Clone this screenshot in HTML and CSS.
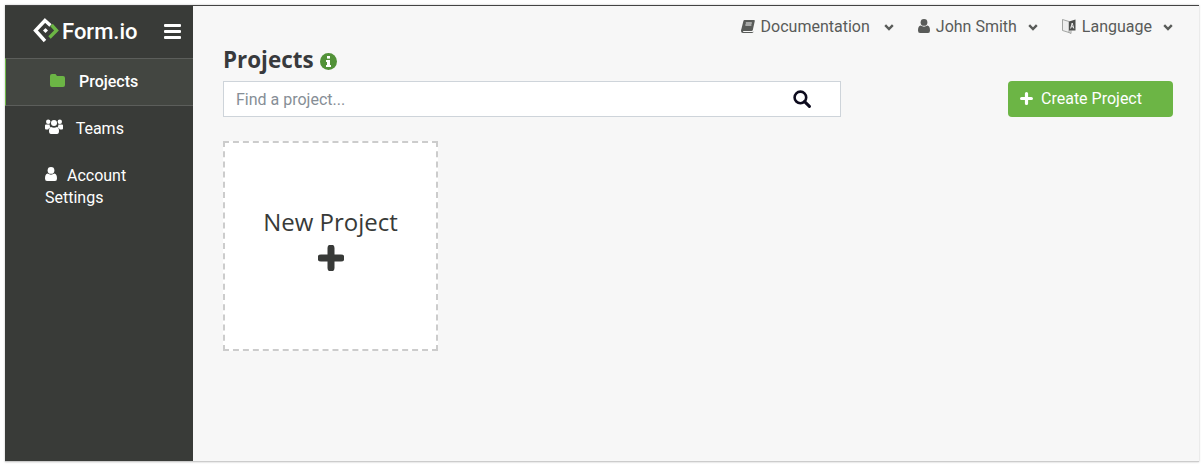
FILE: index.html
```html
<!DOCTYPE html>
<html lang="en">
<head>
    <meta charset="UTF-8">
    <meta name="viewport" content="width=device-width, initial-scale=1.0">
    <title>Form.io</title>
    <link rel="stylesheet" href="styles.css">
</head>
<body>
    <div class="window">
        <!-- Sidebar -->
        <div class="sidebar">
            <div class="brand">
                <svg class="brand-logo" width="26" height="26" viewBox="0 0 26 26">
                    <path d="M17.5 7.5 L12 2.5 L2.5 12.5 L12 23" fill="none" stroke="#fff" stroke-width="3.4"/>
                    <path d="M18.5 7 L23.5 12.5 L16.5 19.5" fill="none" stroke="#6cb545" stroke-width="3.4"/>
                    <path d="M12.5 10 L15 12.5 L12.5 15 L10 12.5 Z" fill="#fff"/>
                </svg>
                <span class="brand-name">Form.io</span>
                <svg class="burger" width="17" height="15" viewBox="0 0 17 15">
                    <rect y="0" width="17" height="3" rx="1" fill="#fff"/>
                    <rect y="6" width="17" height="3" rx="1" fill="#fff"/>
                    <rect y="12" width="17" height="3" rx="1" fill="#fff"/>
                </svg>
            </div>
            <a class="side-link side-active">
                <svg class="side-icon" width="15" height="13" viewBox="0 0 15 13"><path d="M2 0 H5.5 L7 2 H13 A2 2 0 0 1 15 4 V11 A2 2 0 0 1 13 13 H2 A2 2 0 0 1 0 11 V2 A2 2 0 0 1 2 0 Z" fill="#6cb545"/></svg>
                Projects
            </a>
            <a class="side-link side-teams">
                <svg class="side-icon" width="18" height="15" viewBox="0 0 18 15" fill="#fff">
                    <circle cx="3.2" cy="2.8" r="2.2"/><circle cx="14.8" cy="2.8" r="2.2"/><circle cx="9" cy="4" r="3"/>
                    <path d="M0 6.5 Q0 5.6 1 5.6 H4.6 Q4.6 7.5 5.6 8.5 Q3.6 9 3.2 10.6 H1 Q0 10.6 0 9.6 Z"/>
                    <path d="M18 6.5 Q18 5.6 17 5.6 H13.4 Q13.4 7.5 12.4 8.5 Q14.4 9 14.8 10.6 H17 Q18 10.6 18 9.6 Z"/>
                    <path d="M6 8 Q9 9.6 12 8 Q14 8.6 14 12 Q14 15 12 15 H6 Q4 15 4 12 Q4 8.6 6 8 Z"/>
                </svg>
                Teams
            </a>
            <a class="side-link side-account">
                <svg class="side-icon" width="12" height="14" viewBox="0 0 12 14" fill="#fff">
                    <circle cx="6" cy="3.4" r="3.4"/>
                    <path d="M2.6 6.6 Q6 8.8 9.4 6.6 Q12 7.2 12 11.5 Q12 14 10 14 H2 Q0 14 0 11.5 Q0 7.2 2.6 6.6 Z"/>
                </svg>
                Account Settings
            </a>
        </div>

        <!-- Main area -->
        <div class="main">
            <div class="topnav">
                <a class="top-link top-doc">
                    <svg width="14" height="13" viewBox="0 0 14 13" fill="#595b59"><path d="M3.5 0 H13 Q14 0 13.8 1 L11.8 10 Q11.6 11 10.5 11 H2.6 Q1.8 11 1.9 11.6 Q2 12 2.6 12 H11.6 L12.6 11.6 Q12.4 13 11 13 H2 Q0 13 0 11 Q0 10 0.4 9 L2.4 1 Q2.6 0 3.5 0 Z"/><path d="M4.8 3 H10.8 M4.4 5 H10.4" stroke="#f7f7f7" stroke-width="1"/></svg>
                    <span>Documentation</span>
                    <svg class="chev" width="10" height="7" viewBox="0 0 10 7"><path d="M1.2 1.2 L5 5 L8.8 1.2" fill="none" stroke="#595b59" stroke-width="2.4"/></svg>
                </a>
                <a class="top-link">
                    <svg width="12" height="14" viewBox="0 0 12 14" fill="#595b59"><circle cx="6" cy="3.4" r="3.4"/><path d="M2.6 6.6 Q6 8.8 9.4 6.6 Q12 7.2 12 11.5 Q12 14 10 14 H2 Q0 14 0 11.5 Q0 7.2 2.6 6.6 Z"/></svg>
                    <span>John Smith</span>
                    <svg class="chev" width="10" height="7" viewBox="0 0 10 7"><path d="M1.2 1.2 L5 5 L8.8 1.2" fill="none" stroke="#595b59" stroke-width="2.4"/></svg>
                </a>
                <a class="top-link">
                    <svg width="14" height="16" viewBox="0 0 14 16"><path d="M0.5 1.5 L7 3.5 V14.5 L0.5 12.5 Z M7 14.5 L9 15.5 V12.5" fill="#eee" stroke="#8d8f8d" stroke-width="0.8"/><path d="M7 3.5 L13.5 1.5 V12.5 L7 12.5 Z" fill="#4c4e4c"/><path d="M8.6 10.5 L10.2 5 L11.8 10.5 M9.2 8.8 H11.2" fill="none" stroke="#f7f7f7" stroke-width="0.9"/></svg>
                    <span>Language</span>
                    <svg class="chev" width="10" height="7" viewBox="0 0 10 7"><path d="M1.2 1.2 L5 5 L8.8 1.2" fill="none" stroke="#595b59" stroke-width="2.4"/></svg>
                </a>
            </div>

            <h1 class="page-title">Projects
                <svg class="info" width="17" height="17" viewBox="0 0 17 17"><circle cx="8.5" cy="8.5" r="8.5" fill="#529238"/><rect x="7" y="3" width="3" height="2.6" fill="#fff"/><path d="M6 7 H10 V12 H11 V14 H6 V12 H7 V9 H6 Z" fill="#fff"/></svg>
            </h1>

            <div class="toolbar">
                <div class="search">
                    <input class="search-input" type="text" placeholder="Find a project...">
                    <svg width="18" height="18" viewBox="0 0 18 18"><circle cx="7.4" cy="7.4" r="5.8" fill="none" stroke="#0d0b1e" stroke-width="2.6"/><path d="M11.6 11.6 L16.4 16.4" stroke="#0d0b1e" stroke-width="3" stroke-linecap="round"/></svg>
                </div>
                <a class="create-btn">
                    <svg width="13" height="13" viewBox="0 0 13 13"><path d="M6.5 1.6 V11.4 M1.6 6.5 H11.4" stroke="#fff" stroke-width="3.2" stroke-linecap="round"/></svg>
                    Create Project
                </a>
            </div>

            <!-- Project cards -->
            <div class="new-card">
                <div class="new-card-title">New Project</div>
                <svg class="new-card-plus" width="26" height="26" viewBox="0 0 26 26"><path d="M13 3 V23 M3 13 H23" stroke="#383a38" stroke-width="7" stroke-linecap="round"/></svg>
            </div>
        </div>
    </div>
</body>
</html>
```

FILE: styles.css
```css
/* General body styling */
html, body {
    height: 100%;
}

body {
    margin: 0;
    padding: 5px 5px 4px;
    box-sizing: border-box;
    background: #ffffff;
    font-family: 'Roboto', sans-serif;
    color: #595b59;
}

.window {
    display: flex;
    height: 100%;
    box-sizing: border-box;
    border-top: 1px solid #444;
    border-bottom: 1px solid #ccc;
    box-shadow: 0 0 2px rgba(0, 0, 0, 0.25);
}

/* Sidebar */
.sidebar {
    width: 188px;
    flex-shrink: 0;
    background: #393b38;
    color: #ffffff;
}

.brand {
    display: flex;
    align-items: center;
    height: 52px;
    padding: 0 12px 2px 28px;
    box-sizing: border-box;
}

.brand-logo {
    flex-shrink: 0;
}

.brand-name {
    font-size: 22px;
    font-weight: 500;
    margin-left: 3px;
}

.burger {
    margin-left: auto;
}

.side-link {
    display: block;
    font-size: 16px;
    line-height: 22px;
    padding: 12px 20px 13px 40px;
}

.side-icon {
    margin-right: 6px;
}

.side-active {
    background: #434641;
    border-top: 1px solid #5c5e5b;
    border-bottom: 1px solid #5c5e5b;
    border-left: 1px solid #6cb545;
    font-weight: 500;
    padding-left: 44px;
    padding-bottom: 12px;
}

.side-active .side-icon {
    margin-right: 10px;
}

.side-teams .side-icon {
    margin-right: 9px;
}

/* Main area */
.main {
    flex: 1;
    background: #f7f7f7;
    padding: 0 26px 0 30px;
    min-width: 0;
}

.topnav {
    display: flex;
    justify-content: flex-end;
    gap: 24px;
    height: 41px;
    padding-top: 9px;
    box-sizing: border-box;
}

.top-link {
    display: flex;
    align-items: center;
    height: 22px;
    font-size: 16px;
}

.top-link span {
    margin-left: 6px;
}

.chev {
    margin-left: 11px;
    margin-top: 3px;
}

.top-doc .chev {
    margin-left: 14px;
}

.page-title {
    margin: 0;
    height: 34px;
    line-height: 26px;
    font-family: 'Open Sans', sans-serif;
    font-size: 22.4px;
    font-weight: 700;
    color: #383a3d;
}

.info {
    vertical-align: -2px;
    margin-left: 1px;
}

.toolbar {
    display: flex;
    justify-content: space-between;
    margin-bottom: 24px;
}

.search {
    display: flex;
    align-items: center;
    width: 618px;
    height: 36px;
    box-sizing: border-box;
    background: #ffffff;
    border: 1px solid #ced4da;
    padding-right: 29px;
}

.search-input {
    flex: 1;
    border: none;
    outline: none;
    background: none;
    padding: 0 12px;
    font-family: 'Roboto', sans-serif;
    font-size: 16px;
}

.search-input::placeholder {
    color: #868e96;
}

.create-btn {
    display: flex;
    align-items: center;
    gap: 8px;
    width: 165px;
    height: 36px;
    box-sizing: border-box;
    padding: 0 0 2px 12px;
    background: #6cb545;
    color: #ffffff;
    border-radius: 4px;
    font-size: 16px;
}

/* New project card */
.new-card {
    display: flex;
    flex-direction: column;
    align-items: center;
    width: 215px;
    height: 210px;
    box-sizing: border-box;
    background: #ffffff;
    border: 2px dashed #cccccc;
    padding-top: 61px;
    color: #383a38;
}

.new-card-title {
    font-family: 'Open Sans', sans-serif;
    font-size: 24px;
    line-height: 36px;
}

.new-card-plus {
    margin-top: 5px;
}
```
